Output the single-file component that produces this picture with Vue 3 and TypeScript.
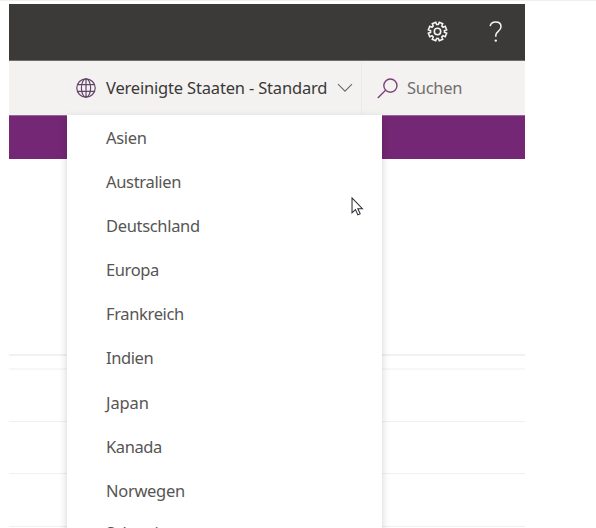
<script setup lang="ts">
interface Region {
  name: string
  spacing: number
}

const regions: Region[] = [
  { name: 'Asien', spacing: -0.3 },
  { name: 'Australien', spacing: -0.32 },
  { name: 'Deutschland', spacing: -0.33 },
  { name: 'Europa', spacing: -0.4 },
  { name: 'Frankreich', spacing: -0.36 },
  { name: 'Indien', spacing: -0.4 },
  { name: 'Japan', spacing: -0.1 },
  { name: 'Kanada', spacing: -0.4 },
  { name: 'Norwegen', spacing: -0.3 },
  { name: 'Schweiz', spacing: -0.2 },
]

// Outline of an eight-toothed gear centred on (0, 0).
const gearPath = (() => {
  const points: string[] = []
  for (let i = 0; i < 8; i++) {
    const base = (i * Math.PI) / 4 + Math.PI / 8
    for (const [offset, radius] of [[-0.27, 7], [-0.2, 9.3], [0.2, 9.3], [0.27, 7]]) {
      points.push(`${(Math.cos(base + offset) * radius).toFixed(2)},${(Math.sin(base + offset) * radius).toFixed(2)}`)
    }
  }
  return `M${points.join('L')}Z`
})()
</script>

<template>
  <div class="page">
    <div class="app">
      <header class="topbar">
        <svg class="gear" viewBox="-10.5 -10.5 21 21">
          <path :d="gearPath" />
          <circle r="3.2" />
        </svg>
        <svg class="help" viewBox="0 0 14 22">
          <path d="M1.2 5.2C1.6 2.6 3.6 1 6.6 1c3.2 0 5.4 1.8 5.4 4.7 0 4.6-5.2 4.7-5.2 8.6v1.4" />
          <circle cx="6.8" cy="19.6" r="1.2" />
        </svg>
      </header>
      <div class="toolbar">
        <div class="picker">
          <svg class="globe" viewBox="0 0 20 20">
            <circle cx="10" cy="10" r="9.2" />
            <ellipse cx="10" cy="10" rx="4.6" ry="9.2" />
            <path d="M10 .8v18.4M1.7 6.7h16.6M1.7 13.3h16.6" />
          </svg>
          <span class="current">Vereinigte Staaten - Standard</span>
          <svg class="chevron" viewBox="0 0 16 10"><path d="M1 1.2l7 7 7-7" /></svg>
        </div>
        <div class="search">
          <svg class="lens" viewBox="0 0 21 21">
            <circle cx="13.4" cy="7.6" r="6.6" />
            <path d="M8.6 12.3L.8 20" />
          </svg>
          <span class="hint">Suchen</span>
        </div>
      </div>
      <div class="banner"></div>
      <div class="content">
        <div class="intro"></div>
        <div class="head"></div>
        <div class="row"></div>
        <div class="row"></div>
        <div class="row last"></div>
      </div>
      <ul class="menu">
        <li v-for="region in regions" :key="region.name" :style="{ letterSpacing: region.spacing + 'px' }">{{ region.name }}</li>
      </ul>
      <svg class="cursor" viewBox="0 0 13 20">
        <path d="M1 1v15.6l3.6-3.3 2.6 5.5 2.4-1.1-2.5-5.4h4.8z" />
      </svg>
    </div>
  </div>
</template>

<style>
body {
  background: #fff;
  overflow: hidden;
}
</style>

<style scoped>
.page {
  box-sizing: border-box;
  height: 528px;
  padding: 3px 71px 0 9px;
  border-top: 1px solid #f0f0f0;
  overflow: hidden;
  font-family: "Noto Sans", "Open Sans", sans-serif;
  font-size: 16.5px;
}
.app {
  position: relative;
  height: 524px;
}
svg {
  display: block;
  flex: none;
  fill: none;
}
.topbar {
  box-sizing: border-box;
  height: 57px;
  display: flex;
  align-items: center;
  justify-content: flex-end;
  gap: 41px;
  padding: 0 22px 1px 0;
  background: #3b3a38;
  border-bottom: 1px solid #706e6c;
}
.gear {
  width: 21px;
  height: 21px;
  stroke: #f4f4f4;
  stroke-width: 1.6;
}
.help {
  width: 14px;
  height: 22px;
  stroke: #f4f4f4;
  stroke-width: 1.5;
}
.help circle {
  fill: #f4f4f4;
  stroke: none;
}
.toolbar {
  height: 54px;
  display: flex;
  background: #f3f2f1;
}
.picker {
  box-sizing: border-box;
  width: 353px;
  display: flex;
  align-items: center;
  padding-left: 67px;
  border-right: 1px solid #eceae9;
}
.globe {
  width: 20px;
  height: 20px;
  stroke: #65456b;
  stroke-width: 1.2;
}
.current {
  width: 222px;
  margin-left: 10px;
  padding-bottom: 1px;
  color: #3a3938;
  white-space: nowrap;
  letter-spacing: -0.18px;
}
.chevron {
  width: 16px;
  height: 10px;
  margin-left: 9px;
  stroke: #6b6968;
  stroke-width: 1.1;
}
.search {
  display: flex;
  align-items: center;
  padding-left: 15px;
}
.lens {
  width: 21px;
  height: 21px;
  stroke: #7a4379;
  stroke-width: 1.4;
}
.hint {
  margin-left: 9px;
  padding-bottom: 1px;
  color: #716f6d;
  letter-spacing: -0.28px;
}
.banner {
  box-sizing: border-box;
  height: 44px;
  background: #742774;
  border-top: 1px solid #99649a;
}
.intro {
  box-sizing: border-box;
  height: 197px;
  border-bottom: 2px solid #f1f1f1;
}
.head {
  box-sizing: border-box;
  height: 14px;
  border-bottom: 2px solid #f7f7f7;
}
.row {
  box-sizing: border-box;
  height: 52px;
  border-bottom: 1px solid #f0f0f0;
}
.row.last {
  height: 53px;
}
.menu {
  position: absolute;
  top: 111px;
  left: 58px;
  width: 315px;
  height: 430px;
  margin: 0;
  padding: 0.5px 0 0;
  box-sizing: border-box;
  background: #fff;
  list-style: none;
  box-shadow: 0 3px 8px rgba(0, 0, 0, 0.18);
}
.menu li {
  box-sizing: border-box;
  height: 44.2px;
  padding-left: 39px;
  line-height: 44.2px;
  color: #565554;
}
.menu li:last-child {
  margin-top: -2.6px;
}
.cursor {
  position: absolute;
  top: 193px;
  left: 342px;
  width: 12.5px;
  height: 19px;
  fill: #fff;
  stroke: #2a2930;
  stroke-width: 1.1;
}
</style>
